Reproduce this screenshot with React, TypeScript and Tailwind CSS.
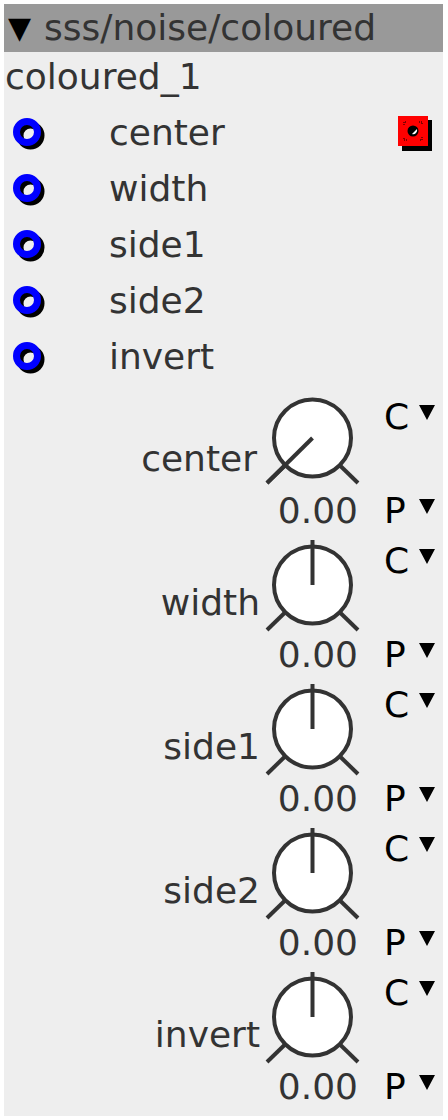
import React from "react";

const FONT = { fontFamily: '"DejaVu Sans", Verdana, sans-serif' };

function Port() {
  return (
    <svg width="36" height="36" viewBox="0 0 36 36" className="shrink-0 mt-[5px]">
      <circle cx="17.5" cy="17.5" r="10.5" fill="none" stroke="#000" strokeWidth="7" />
      <circle cx="14" cy="14" r="10.5" fill="none" stroke="#0000ff" strokeWidth="7" />
    </svg>
  );
}

function RedBox() {
  return (
    <svg width="34" height="35" viewBox="0 0 34 35" className="shrink-0">
      <rect x="4" y="4" width="30" height="31" fill="#000" />
      <rect x="0" y="0" width="30" height="30" fill="#ff0000" />
      <path d="M6 9 V6 H9 M21 6 H24 V9 M24 21 V24 H21 M9 24 H6 V21" stroke="#000" strokeWidth="1" fill="none" strokeDasharray="1 1" />
      <circle cx="15" cy="15" r="5.5" fill="#000" />
      <path d="M14 18 L19 13 A4 4 0 0 1 14 18 Z" fill="#fff" />
    </svg>
  );
}

function Knob({ down }: { down?: boolean }) {
  const cx = 49.5;
  const cy = down ? 50 : 53;
  const r = 38.5;
  const d = r * 0.7071;
  return (
    <svg width="99" height="103" viewBox="0 0 99 103" className="block">
      <line x1={cx - d} y1={cy + d} x2="4" y2={cy + 45} stroke="#333" strokeWidth="4" />
      <line x1={cx + d} y1={cy + d} x2="95" y2={cy + 45} stroke="#333" strokeWidth="4" />
      <circle cx={cx} cy={cy} r={r} fill="#fff" stroke="#333" strokeWidth="4" />
      {down ? (
        <line x1={cx} y1={cy} x2="4" y2={cy + 45} stroke="#333" strokeWidth="4" />
      ) : (
        <line x1={cx} y1={cy} x2={cx} y2={cy - 45} stroke="#333" strokeWidth="4" />
      )}
    </svg>
  );
}

function Tri() {
  return (
    <svg width="16" height="15" viewBox="0 0 16 15" className="shrink-0">
      <path d="M0 0 H16 L8 15 Z" fill="#000" />
    </svg>
  );
}

function KnobSection({ label, down }: { label: string; down?: boolean }) {
  return (
    <div className="flex h-[144px]">
      <div
        className={
          down
            ? "flex-1 pr-[6px] pt-[51px] text-right text-[36px] leading-[40px] text-[#333]"
            : "flex-1 pr-[3px] pt-[51px] text-right text-[36px] leading-[40px] text-[#333]"
        }
      >
        {label}
      </div>
      <div className="w-[99px] flex flex-col">
        <Knob down={down} />
        <div className="text-right pr-[4px] text-[36px] leading-[40px] text-[#333]">0.00</div>
      </div>
      <div className="w-[81px] pl-[22px] flex flex-col text-[36px] leading-[40px] text-black">
        <div className="flex items-start pt-[9px]">
          <span>C</span>
          <span className="ml-[10px] mt-[8px]"><Tri /></span>
        </div>
        <div className="flex items-start mt-[54px]">
          <span>P</span>
          <span className="ml-[13px] mt-[8px]"><Tri /></span>
        </div>
      </div>
    </div>
  );
}

export default function App() {
  const ports = ["center", "width", "side1", "side2", "invert"];
  const knobs = ["center", "width", "side1", "side2", "invert"];
  return (
    <div className="w-[448px] h-[1120px] bg-white p-[4px]" style={FONT}>
      <div className="w-[439px] h-[1112px] bg-[#eeeeee] flex flex-col">
        <div className="h-[48px] bg-[#999999] flex items-center pl-[4px] text-[36px] text-[#333] leading-[40px]">
          <span className="text-[#000] text-[30px]">▼</span>
          <span className="ml-[13px]">sss/noise/coloured</span>
        </div>
        <div className="h-[53px] pl-[1px] pt-[5px] text-[36px] leading-[40px] text-[#333]">coloured_1</div>
        {ports.map((p, i) => (
          <div key={p} className="h-[56px] flex items-center pl-[9px]">
            <Port />
            <span className="ml-[60px] text-[36px] leading-[40px] text-[#333]">{p}</span>
            {i === 0 && (
              <span className="ml-auto mr-[11px]">
                <RedBox />
              </span>
            )}
          </div>
        ))}
        <div className="h-[3px]" />
        {knobs.map((k, i) => (
          <KnobSection key={k} label={k} down={i === 0} />
        ))}
      </div>
    </div>
  );
}
